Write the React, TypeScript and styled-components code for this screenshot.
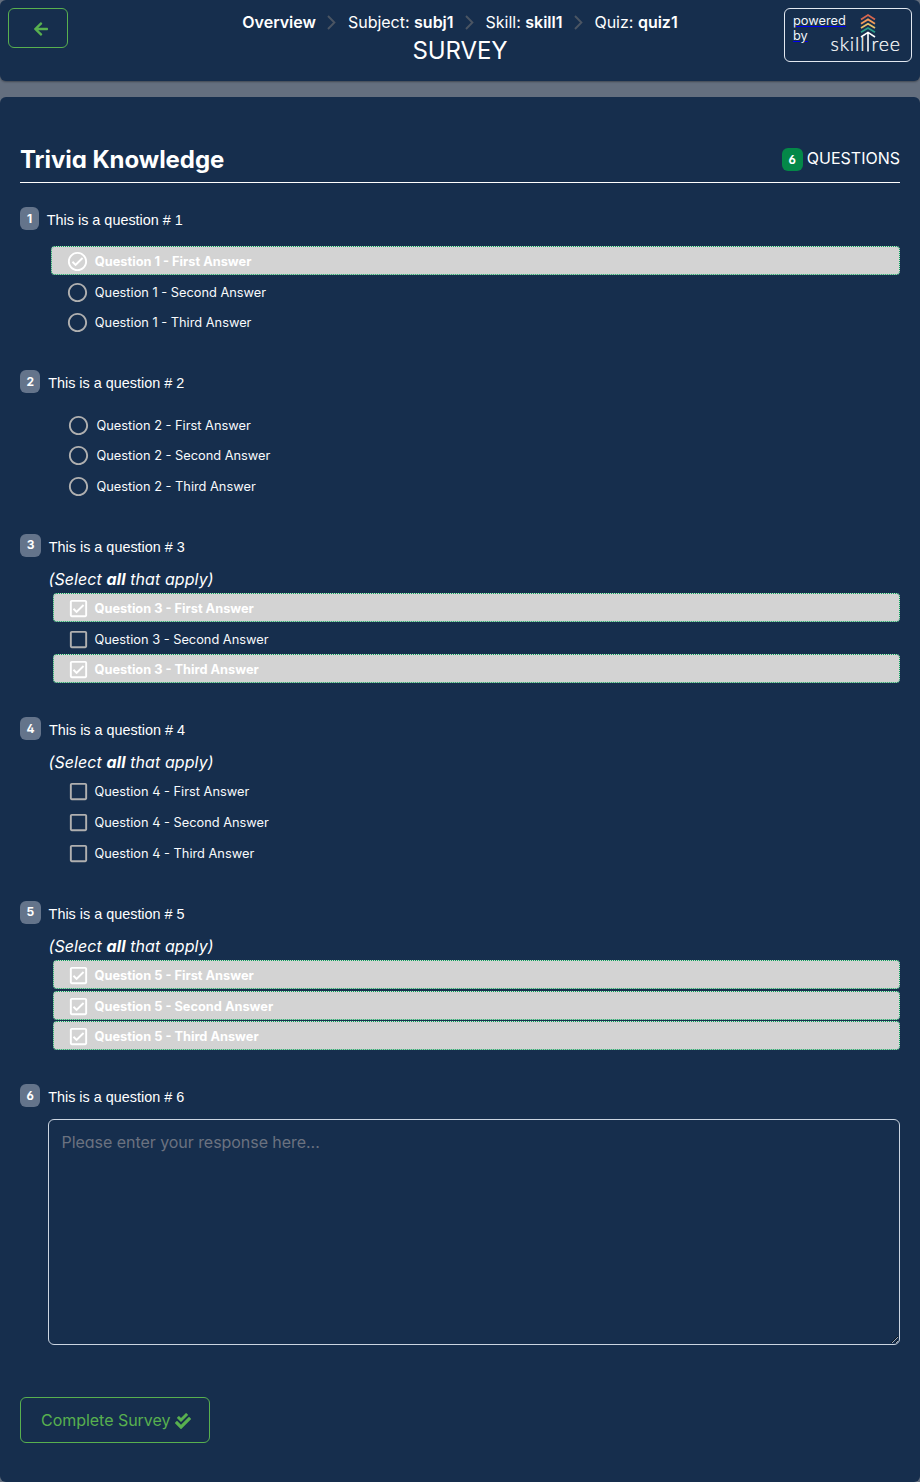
import React from "react";
import styled, { createGlobalStyle, css } from "styled-components";
import { FaArrowLeft, FaCheckDouble } from "react-icons/fa";

const GlobalStyle = createGlobalStyle`
  *, *::before, *::after { box-sizing: border-box; }
  body {
    margin: 0;
    background: #646f7f;
    color: #fff;
    font-family: Inter, "Liberation Sans", sans-serif;
    font-feature-settings: "cv02", "cv03", "cv04", "cv11";
    font-size: 16px;
    line-height: 24px;
  }
`;

const Page = styled.div`
  display: flex;
  flex-direction: column;
  gap: 16px;
  height: 1482px;
`;

const Header = styled.header`
  display: grid;
  grid-template-columns: 1fr auto 1fr;
  align-items: start;
  height: 81px;
  padding: 8px;
  background: #162e4d;
  border-radius: 6px;
  box-shadow: 0 1px 2px rgba(0, 0, 0, 0.35);
`;

const OutlineButton = styled.button`
  display: inline-flex;
  align-items: center;
  border: 1px solid #58b04f;
  border-radius: 6px;
  background: transparent;
  color: #58b04f;
  font: inherit;
  font-feature-settings: inherit;
`;

const BackButton = styled(OutlineButton)`
  width: 60px;
  height: 40px;
  padding: 1px 0 0 23.5px;
`;

const CompleteButton = styled(OutlineButton)`
  width: 190px;
  height: 46px;
  margin-top: 52px;
  padding: 0 0 0 20px;
  gap: 4.8px;
  letter-spacing: -0.03px;
  svg { position: relative; top: 0.5px; }
`;

const Center = styled.div`
  display: flex;
  flex-direction: column;
  align-items: center;
  padding-top: 2px;
`;

const Crumbs = styled.nav`
  display: flex;
  align-items: center;
  height: 24px;
  letter-spacing: -0.01px;
  b { font-weight: 600; }
`;

const Chevron = styled.svg`
  width: 9px;
  height: 15px;
  margin: 0 11.5px 0 11.5px;
  fill: none;
  stroke: #4b5563;
  stroke-width: 1.9;
`;

const Title = styled.h1`
  margin: 2px 0 0;
  font-size: 24px;
  line-height: 30px;
  font-weight: 400;
  letter-spacing: -0.1px;
`;

const Powered = styled.a`
  justify-self: end;
  display: flex;
  width: 128px;
  height: 54px;
  padding: 4px 8px;
  border: 1px solid #e2e8f0;
  border-radius: 6px;
  color: #0000ee;
`;

const PoweredText = styled.span`
  width: 37px;
  font-size: 12.8px;
  line-height: 15px;
  span { color: #f1f5f9; }
`;

const Logo = styled.svg`
  width: 72px;
  height: 44px;
  flex: none;
`;

const Card = styled.main`
  flex: 1;
  padding: 47px 20px 0;
  background: #162e4d;
  border-radius: 6px;
`;

const CardHead = styled.div`
  display: flex;
  justify-content: space-between;
  height: 39px;
  border-bottom: 1px solid #fff;
  margin-bottom: 24px;
`;

const QuizName = styled.h2`
  margin: 0;
  font-size: 24px;
  line-height: 32px;
  font-weight: 700;
  letter-spacing: -0.06px;
`;

const Count = styled.div`
  display: flex;
  align-items: flex-start;
  gap: 4px;
  padding-top: 4px;
  line-height: 20px;
`;

const Badge = styled.span<{ $green?: boolean; $w: number }>`
  display: inline-flex;
  flex: none;
  align-items: center;
  justify-content: center;
  width: ${(p) => p.$w}px;
  height: 23px;
  border-radius: 6px;
  background: ${(p) => (p.$green ? "#048848" : "#64748b")};
  font-size: 12px;
  font-weight: 700;
`;

const Block = styled.section<{ $h: number }>`
  height: ${(p) => p.$h}px;
`;

const Prompt = styled.div`
  display: flex;
  gap: 7.8px;
  height: 23px;
`;

const PromptText = styled.span`
  font-family: "Liberation Sans", Arial, sans-serif;
  font-size: 14.4px;
  line-height: 26px;
`;

const Hint = styled.div`
  margin: 10px 0 2.4px 28.5px;
  font-style: italic;
  letter-spacing: 0.09px;
  b { font-weight: 700; }
`;

const Answers = styled.div<{ $indent: number; $top: number }>`
  display: flex;
  flex-direction: column;
  gap: 1.5px;
  margin: ${(p) => p.$top}px 0 0 ${(p) => p.$indent}px;
`;

const Answer = styled.div<{ $on?: boolean; $multi?: boolean }>`
  display: flex;
  align-items: center;
  gap: ${(p) => (p.$multi ? 5 : 6.2)}px;
  height: 29.1px;
  padding: 2.4px 0 0 ${(p) => (p.$multi ? 12.5 : 13.6)}px;
  border: 1px dotted transparent;
  border-radius: 4px;
  font-size: 12.8px;
  color: #f8fafc;
  ${(p) =>
    p.$on &&
    css`
      background: #d3d3d3;
      border-color: #07a35a;
      color: #fff;
      font-weight: 700;
    `}
`;

const Mark = styled.svg<{ $on?: boolean }>`
  width: 23px;
  height: 23px;
  flex: none;
  margin-bottom: 1px;
  fill: ${(p) => (p.$on ? "#fff" : "#b0b0b0")};
`;

const Response = styled.textarea`
  display: block;
  width: 852px;
  height: 226px;
  margin: 12px 0 0 28px;
  padding: 10px 12.6px;
  background: transparent;
  border: 1px solid #cbd5e1;
  border-radius: 6px;
  color: #fff;
  font: inherit;
  font-feature-settings: inherit;
  letter-spacing: -0.05px;
  &::placeholder { color: #6b7280; }
`;

const CHECK = "M16.59 7.58 10 14.17l-2.59-2.58L6 13l4 4 8-8z";
const CIRCLE = "M12 2C6.48 2 2 6.48 2 12s4.48 10 10 10 10-4.48 10-10S17.52 2 12 2zm0 18c-4.42 0-8-3.58-8-8s3.58-8 8-8 8 3.58 8 8-3.58 8-8 8z";
const SQUARE = "M19 3H5c-1.1 0-2 .9-2 2v14c0 1.1.9 2 2 2h14c1.1 0 2-.9 2-2V5c0-1.1-.9-2-2-2zm0 16H5V5h14v14z";

type Question = { n: number; w: number; multi?: boolean; indent: number; picked: number[] };

const questions: Question[] = [
  { n: 1, w: 19, indent: 31, picked: [0] },
  { n: 2, w: 20.4, indent: 32.7, picked: [] },
  { n: 3, w: 21, multi: true, indent: 33, picked: [0, 2] },
  { n: 4, w: 21.2, multi: true, indent: 33, picked: [] },
  { n: 5, w: 20.8, multi: true, indent: 33, picked: [0, 1, 2] },
];

const Separator = () => (
  <Chevron viewBox="0 0 9 15"><path d="M1 1l6.4 6.5L1 14" /></Chevron>
);

const SkillTreeLogo = () => (
  <Logo viewBox="830 13 72 44" fill="none" strokeWidth="1.8">
    <path d="M861 19.4l7-4.3 7 4.3" stroke="#d8674f" />
    <path d="M861 23.7l7-4.3 7 4.3" stroke="#ee9a5b" />
    <path d="M861 28l7-4.3 7 4.3" stroke="#e6c069" />
    <path d="M861 32.3l7-4.3 7 4.3" stroke="#2a9d8a" />
    <path d="M861 37l7-4.6 7 4.6M868 32.4v19" stroke="#fff" strokeWidth="1.6" />
    <g fill="#fff" stroke="#fff" strokeWidth="0.2" fontFamily="Lato, sans-serif" fontSize="19.6" fontWeight="300">
      <text x="830.5" y="51.4" textLength="34" lengthAdjust="spacing">skill</text>
      <text x="871.5" y="51.4" textLength="28.5" lengthAdjust="spacing">ree</text>
    </g>
  </Logo>
);

export default function App() {
  return (
    <>
      <GlobalStyle />
      <Page>
        <Header>
          <BackButton aria-label="Back"><FaArrowLeft size={16} /></BackButton>
          <Center>
            <Crumbs>
              <b>Overview</b>
              <Separator />
              <span>Subject: <b>subj1</b></span>
              <Separator />
              <span>Skill: <b>skill1</b></span>
              <Separator />
              <span>Quiz: <b>quiz1</b></span>
            </Crumbs>
            <Title>SURVEY</Title>
          </Center>
          <Powered href="#">
            <PoweredText><span>powered by</span></PoweredText>
            <SkillTreeLogo />
          </Powered>
        </Header>
        <Card>
          <CardHead>
            <QuizName>Trivia Knowledge</QuizName>
            <Count><Badge $green $w={21}>6</Badge>QUESTIONS</Count>
          </CardHead>
          {questions.map((q) => (
            <Block key={q.n} $h={q.multi ? 183.5 : 163.4}>
              <Prompt>
                <Badge $w={q.w}>{q.n}</Badge>
                <PromptText>This is a question # {q.n}</PromptText>
              </Prompt>
              {q.multi && <Hint>(Select <b>all</b> that apply)</Hint>}
              <Answers $indent={q.indent} $top={q.multi ? 0 : 16.4}>
                {["First", "Second", "Third"].map((name, i) => {
                  const on = q.picked.includes(i);
                  return (
                    <Answer key={name} $on={on} $multi={q.multi}>
                      <Mark $on={on} viewBox="0 0 24 24">
                        <path d={q.multi ? SQUARE : CIRCLE} />
                        {on && <path d={CHECK} />}
                      </Mark>
                      <span>Question {q.n} - {name} Answer</span>
                    </Answer>
                  );
                })}
              </Answers>
            </Block>
          ))}
          <Prompt>
            <Badge $w={20.4}>6</Badge>
            <PromptText>This is a question # 6</PromptText>
          </Prompt>
          <Response placeholder="Please enter your response here..." />
          <CompleteButton>Complete Survey <FaCheckDouble size={16} /></CompleteButton>
        </Card>
      </Page>
    </>
  );
}
